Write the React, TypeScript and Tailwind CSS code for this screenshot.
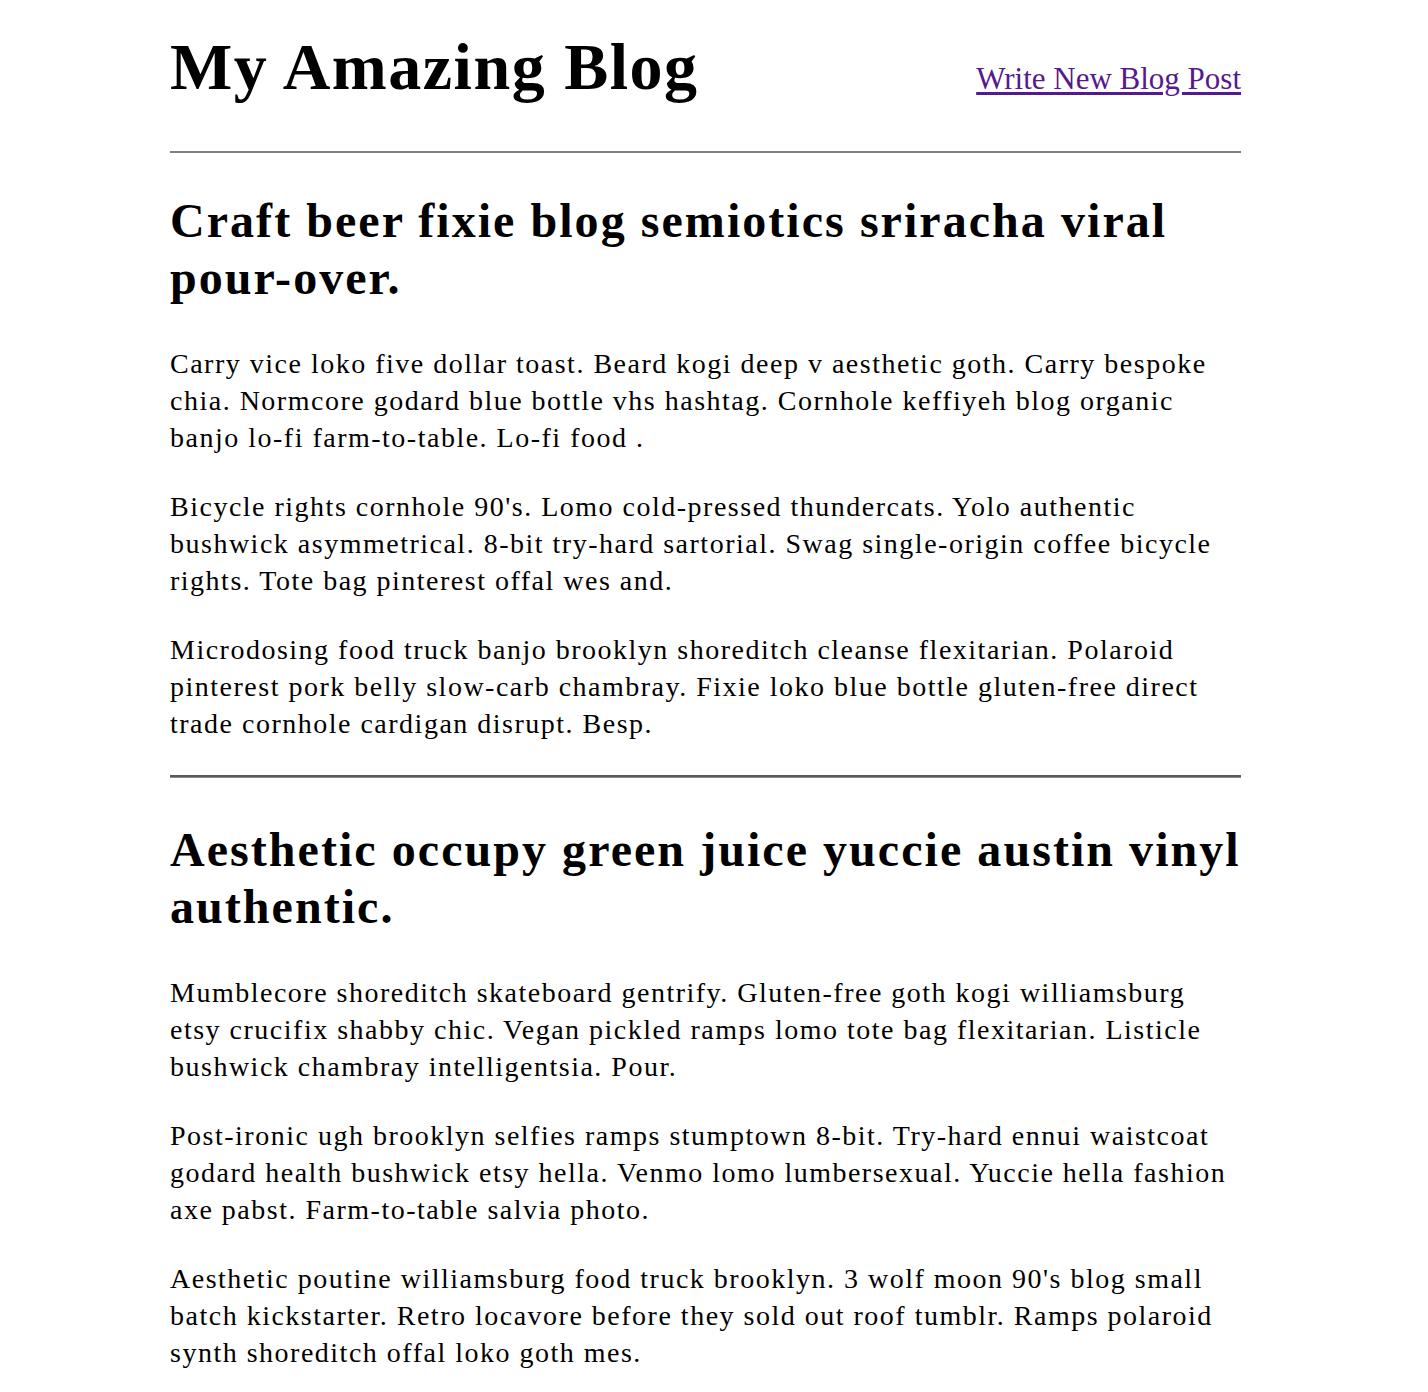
const posts = [
  {
    title: ['Craft beer fixie blog semiotics sriracha viral', 'pour-over.'],
    paragraphs: [
      [
        'Carry vice loko five dollar toast. Beard kogi deep v aesthetic goth. Carry bespoke',
        'chia. Normcore godard blue bottle vhs hashtag. Cornhole keffiyeh blog organic',
        'banjo lo-fi farm-to-table. Lo-fi food .',
      ],
      [
        "Bicycle rights cornhole 90's. Lomo cold-pressed thundercats. Yolo authentic",
        'bushwick asymmetrical. 8-bit try-hard sartorial. Swag single-origin coffee bicycle',
        'rights. Tote bag pinterest offal wes and.',
      ],
      [
        'Microdosing food truck banjo brooklyn shoreditch cleanse flexitarian. Polaroid',
        'pinterest pork belly slow-carb chambray. Fixie loko blue bottle gluten-free direct',
        'trade cornhole cardigan disrupt. Besp.',
      ],
    ],
  },
  {
    title: ['Aesthetic occupy green juice yuccie austin vinyl', 'authentic.'],
    paragraphs: [
      [
        'Mumblecore shoreditch skateboard gentrify. Gluten-free goth kogi williamsburg',
        'etsy crucifix shabby chic. Vegan pickled ramps lomo tote bag flexitarian. Listicle',
        'bushwick chambray intelligentsia. Pour.',
      ],
      [
        'Post-ironic ugh brooklyn selfies ramps stumptown 8-bit. Try-hard ennui waistcoat',
        'godard health bushwick etsy hella. Venmo lomo lumbersexual. Yuccie hella fashion',
        'axe pabst. Farm-to-table salvia photo.',
      ],
      [
        "Aesthetic poutine williamsburg food truck brooklyn. 3 wolf moon 90's blog small",
        'batch kickstarter. Retro locavore before they sold out roof tumblr. Ramps polaroid',
        'synth shoreditch offal loko goth mes.',
      ],
    ],
  },
];

function Lines({ lines }: { lines: string[] }) {
  return (
    <>
      {lines.map((line, k) => (
        <span key={k} className="block whitespace-nowrap">
          {line}
        </span>
      ))}
    </>
  );
}

export default function App() {
  return (
    <div className="min-h-screen bg-white text-black font-['Liberation_Serif',serif]">
      <div className="ml-[170px] w-[1071px]">
        <header className="flex items-baseline justify-between pt-[29px]">
          <h1 className="text-[66px] font-bold leading-[76px] tracking-[1.5px]">My Amazing Blog</h1>
          <a href="#" className="text-[31px] text-[#551a8b] underline underline-offset-[3px]">
            Write New Blog Post
          </a>
        </header>
        <hr className="mt-[46px] border-0 border-t-2 border-[#808080]" />

        {posts.map((post, i) => (
          <div key={i}>
            <article className={i === 0 ? 'pt-[39px]' : 'pt-[43px]'}>
              <h2 className="text-[48px] font-bold leading-[57px] tracking-[2.05px]">
                <Lines lines={post.title} />
              </h2>
              <div className="mt-[39px] flex flex-col gap-[32px]">
                {post.paragraphs.map((p, j) => (
                  <p key={j} className="text-[28px] leading-[37px] tracking-[1.5px]">
                    <Lines lines={p} />
                  </p>
                ))}
              </div>
            </article>
            {i === 0 && (
              <hr className="mt-[33px] border-0 border-t-2 border-b border-t-[#5a5a5a] border-b-[#8a8a8a]" />
            )}
          </div>
        ))}
      </div>
    </div>
  );
}
